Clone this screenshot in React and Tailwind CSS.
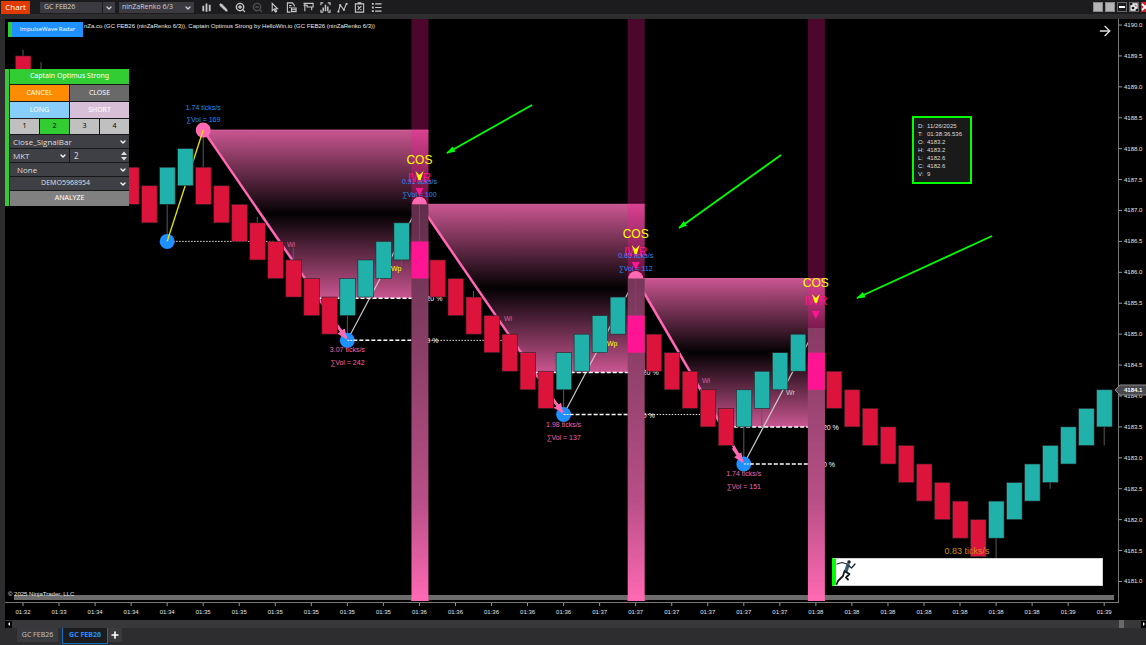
import React from 'react';
import { Plus, ZoomIn, ZoomOut, Pencil, ArrowRight, ChevronDown } from 'lucide-react';

// Scales: bar index -> x, price -> y
const px = (i) => 18 + i * 18.02;
const py = (price) => 6 + (4190 - price) * 61.83;

const BODY = 0.6;

// [index of first bar, top of its body, step per bar, number of bars, kind]
const RUNS = [
  [0, 4189.5, -0.3, 8, 'down'],
  [8, 4187.7, 0.3, 2, 'up'],
  [10, 4187.7, -0.3, 8, 'down'],
  [18, 4185.9, 0.3, 4, 'up'],
  [22, 4186.5, 0, 1, 'signal'],
  [23, 4186.2, -0.3, 7, 'down'],
  [30, 4184.7, 0.3, 4, 'up'],
  [34, 4185.3, 0, 1, 'signal'],
  [35, 4185.0, -0.3, 5, 'down'],
  [40, 4184.1, 0.3, 4, 'up'],
  [44, 4184.7, 0, 1, 'signal'],
  [45, 4184.4, -0.3, 9, 'down'],
  [54, 4182.3, 0.3, 7, 'up'],
];

const CANDLES = RUNS.flatMap(([start, top, step, count, kind]) =>
  Array.from({ length: count }, (_, n) => ({ i: start + n, top: top + step * n, kind }))
);

// [bar, from price, to price]
const WICKS = [
  [0, 4189.6, 4189.5],
  [1, 4189.4, 4189.2],
  [8, 4187.1, 4186.5],
  [10, 4188.3, 4187.7],
  [13, 4186.9, 4186.8],
  [15, 4186.4, 4186.2],
  [18, 4185.3, 4184.9],
  [21, 4186.2, 4186.1],
  [25, 4185.7, 4185.6],
  [30, 4184.1, 4183.7],
  [40, 4183.5, 4182.9],
  [41, 4183.8, 4183.5],
  [54, 4181.7, 4181.3],
  [57, 4182.6, 4182.5],
  [60, 4183.5, 4183.2],
];

const CANDLE_COLORS = { down: '#dc143c', up: '#20b2aa', signal: '#ff1493' };

const WAVES = [
  {
    start: 10, high: 4188.3, lowBar: 18, low: 4184.9, end: 22, endPrice: 4187.1,
    lowText: ['3.07 ticks/s', '∑Vol = 242'], topText: ['0.91 ticks/s', '∑Vol = 100'],
    cos: 146, down: [283, 228, 'Wi'], back: [390, 252, 'Wp', '#ffff00'],
  },
  {
    start: 22, high: 4187.1, lowBar: 30, low: 4183.7, end: 34, endPrice: 4185.9,
    lowText: ['1.98 ticks/s', '∑Vol = 137'], topText: ['0.65 ticks/s', '∑Vol = 112'],
    cos: 220, down: [500, 302, 'Wi'], back: [606, 327, 'Wp', '#ffff00'],
  },
  {
    start: 34, high: 4185.9, lowBar: 40, low: 4182.9, end: 44, endPrice: 4185.1,
    lowText: ['1.74 ticks/s', '∑Vol = 151'], topText: null,
    cos: 269, down: [698, 364, 'Wi'], back: [785, 376, 'Wr', '#d0d0d0'],
  },
];

const DOTTED = [
  [8, 14, 4186.5],
  [22, 27, 4184.9],
  [34, 38, 4183.7],
];

const GREEN_ARROWS = [
  [527, 86, 442, 134],
  [776, 136, 674, 209],
  [987, 217, 852, 279],
];

const PRICES = Array.from({ length: 19 }, (_, n) => 4190 - n * 0.5);

const TIMES = [
  '01:32', '01:33', '01:34', '01:34', '01:34', '01:35', '01:35', '01:35', '01:35', '01:35', '01:35',
  '01:36', '01:36', '01:36', '01:36', '01:36', '01:37', '01:37', '01:37', '01:37', '01:37', '01:37',
  '01:38', '01:38', '01:38', '01:38', '01:38', '01:38', '01:38', '01:39', '01:39',
];

const Wave = ({ wave }) => {
  const x0 = px(wave.start);
  const y0 = py(wave.high);
  const x1 = px(wave.lowBar);
  const y1 = py(wave.low);
  const bottom = y1 - (y1 - y0) * 0.2;
  const right = px(wave.end) + 9;
  const xb = x0 + (x1 - x0) * 0.8;
  return (
    <g>
      <polygon points={`${x0},${y0} ${right},${y0} ${right},${bottom} ${xb},${bottom}`} fill="url(#zone)" />
      <line x1={x0} y1={y0} x2={right} y2={y0} stroke="#d45f9c" />
      <line x1={x0} y1={y0} x2={x1} y2={y1} stroke="#ff69b4" strokeWidth="2.5" />
      <line x1={x1} y1={y1} x2={px(wave.end)} y2={py(wave.endPrice)} stroke="#c8c8c8" strokeWidth="1.2" />
      <line x1={xb} y1={bottom} x2={right} y2={bottom} stroke="#fff" strokeWidth="1.5" strokeDasharray="4 2" />
      <line x1={x1} y1={y1} x2={right} y2={y1} stroke="#fff" strokeWidth="1.5" strokeDasharray="4 2" />
      <text x={right - 2} y={bottom + 3} fill="#fff" fontSize="7">20 %</text>
      <text x={right - 2} y={y1 + 3} fill="#fff" fontSize="7">0 %</text>
    </g>
  );
};

const Signal = ({ wave }) => {
  const x = px(wave.end);
  const top = py(wave.endPrice);
  return (
    <g>
      <rect x={x - 8} y="0" width="17" height={top} fill="#ff1493" fillOpacity="0.3" />
      {wave.topText && <circle cx={x} cy={top} r="7.5" fill="#ff69b4" />}
      <rect x={x - 8} y={top} width="17" height={582 - top} fill="url(#band)" />
      <line x1={x} y1={top} x2={x} y2={top + 37} stroke="#b02878" />
    </g>
  );
};

const SignalLabel = ({ wave }) => {
  const x = px(wave.end);
  return (
    <g textAnchor="middle">
      {wave.topText && (
        <g fill="#1e90ff" fontSize="7">
          <text x={x} y={wave.cos + 19}>{wave.topText[0]}</text>
          <text x={x} y={wave.cos + 32}>{wave.topText[1]}</text>
        </g>
      )}
      <text x={x} y={wave.cos - 1} fill="#ffff00" fontSize="12">COS</text>
      <text x={x} y={wave.cos + 17} fill="#ff1493" fontSize="12">IWR</text>
      <path
        d={`M${x - 4} ${wave.cos + 6} L${x} ${wave.cos + 10} L${x + 4} ${wave.cos + 6} L${x + 1} ${wave.cos + 15} H${x - 1} Z`}
        fill="#ffff00"
      />
      <path d={`M${x - 4} ${wave.cos + 23} h8 l-4 8 Z`} fill="#ff1493" />
    </g>
  );
};

const Chart = () => (
  <svg
    viewBox="0 0 1141 601"
    className="block w-full h-auto font-['Liberation_Sans',Arial,sans-serif]"
    role="img"
    aria-label="GC FEB26 price chart"
  >
    <defs>
      <linearGradient id="zone" x1="0" y1="0" x2="0" y2="1">
        <stop offset="0" stopColor="#ca5691" />
        <stop offset="0.5" stopColor="#030102" />
        <stop offset="1" stopColor="#ca5691" />
      </linearGradient>
      <linearGradient id="band" gradientUnits="userSpaceOnUse" x1="0" y1="180" x2="0" y2="582">
        <stop offset="0" stopColor="#5e2c48" />
        <stop offset="0.25" stopColor="#7b395d" />
        <stop offset="0.75" stopColor="#b84f86" />
        <stop offset="1" stopColor="#ff69b4" />
      </linearGradient>
      <marker id="pinkHead" markerWidth="10" markerHeight="9" refX="9" refY="4.5" orient="auto" markerUnits="userSpaceOnUse">
        <path d="M0 0 L10 4.5 L0 9 Z" fill="#ff69b4" />
      </marker>
      <marker id="greenHead" markerWidth="9" markerHeight="6" refX="8" refY="3" orient="auto" markerUnits="userSpaceOnUse">
        <path d="M0 0 L9 3 L0 6 Z" fill="#00ff00" />
      </marker>
    </defs>

    {WAVES.map((wave) => (
      <Wave key={wave.start} wave={wave} />
    ))}

    {DOTTED.map(([from, to, price]) => (
      <line
        key={from}
        x1={px(from)}
        x2={px(to)}
        y1={py(price)}
        y2={py(price)}
        stroke="#e8e8e8"
        strokeDasharray="1.5 1.5"
      />
    ))}

    {WICKS.map(([i, from, to]) => (
      <line key={i} x1={px(i)} x2={px(i)} y1={py(from)} y2={py(to)} stroke="#5a5a5a" />
    ))}

    <circle cx={px(8)} cy={py(4186.5)} r="7.5" fill="#1e90ff" />
    <circle cx={px(10)} cy={py(4188.3)} r="7.5" fill="#ff69b4" />
    <line x1={px(8)} y1={py(4186.5)} x2={px(10)} y2={py(4188.3)} stroke="#e6e600" strokeWidth="1.4" />

    {WAVES.map((wave) => (
      <g key={wave.lowBar}>
        <circle cx={px(wave.lowBar)} cy={py(wave.low)} r="7.5" fill="#1e90ff" />
        <line
          x1={px(wave.lowBar) - 11}
          y1={py(wave.low) - 16}
          x2={px(wave.lowBar) - 1}
          y2={py(wave.low) - 2}
          stroke="#ff69b4"
          strokeWidth="2.5"
          markerEnd="url(#pinkHead)"
        />
        <line
          x1={px(wave.lowBar)}
          x2={px(wave.lowBar) + 8}
          y1={py(wave.low)}
          y2={py(wave.low)}
          stroke="#fff"
          strokeDasharray="2 1"
        />
      </g>
    ))}

    {WAVES.map((wave) => (
      <Signal key={wave.end} wave={wave} />
    ))}

    {CANDLES.map(({ i, top, kind }) => (
      <rect
        key={i}
        x={kind === 'signal' ? px(i) - 8 : px(i) - 7.5}
        y={py(top)}
        width={kind === 'signal' ? 17 : 15.5}
        height={BODY * 61.83}
        fill={CANDLE_COLORS[kind]}
        stroke={kind === 'signal' ? 'none' : '#2a2024'}
        strokeWidth="0.6"
      />
    ))}

    {WAVES.map((wave) => (
      <g key={wave.low} fontSize="7">
        <text x={wave.down[0] - 1} y={wave.down[1]} fill="#ff69b4" fillOpacity="0.8">{wave.down[2]}</text>
        <text x={wave.back[0] - 4} y={wave.back[1]} fill={wave.back[3]}>{wave.back[2]}</text>
        <g fill="#f066ad" textAnchor="middle">
          <text x={px(wave.lowBar)} y={py(wave.low) + 12}>{wave.lowText[0]}</text>
          <text x={px(wave.lowBar)} y={py(wave.low) + 25}>{wave.lowText[1]}</text>
        </g>
        <SignalLabel wave={wave} />
      </g>
    ))}

    <g fill="#1e90ff" fontSize="7" textAnchor="middle">
      <text x={px(10)} y="91">1.74 ticks/s</text>
      <text x={px(10)} y="103">∑Vol = 169</text>
    </g>
    <text x="962" y="535" fill="#cc8c1c" fontSize="9" textAnchor="middle">0.83 ticks/s</text>

    {GREEN_ARROWS.map(([x1, y1, x2, y2]) => (
      <line key={x1} x1={x1} y1={y1} x2={x2} y2={y2} stroke="#00ff00" strokeWidth="1.8" markerEnd="url(#greenHead)" />
    ))}

    {/* axes */}
    <rect x="9" y="576" width="1100" height="5" fill="#6c6c6c" />
    {WAVES.map((wave) => (
      <rect key={wave.end} x={px(wave.end) - 8} y="576" width="17" height="6" fill="#ff69b4" />
    ))}
    <text x="3" y="577" fill="#e8e8e8" fontSize="6">© 2025 NinjaTrader, LLC</text>
    <path d="M1113.5 0 V583.5 M0 583.5 H1114" stroke="#777" fill="none" />
    <g fill="#e4e4e4" fontSize="6">
      {PRICES.map((price) => (
        <g key={price}>
          <line x1="1114" x2="1117" y1={py(price)} y2={py(price)} stroke="#999" />
          <text x="1119" y={py(price) + 2}>{price.toFixed(1)}</text>
        </g>
      ))}
      {TIMES.map((time, n) => (
        <g key={n} textAnchor="middle">
          <line x1={px(n * 2)} x2={px(n * 2)} y1="584" y2="587" stroke="#999" />
          <text x={px(n * 2)} y="595">{time}</text>
        </g>
      ))}
    </g>
    <path d="M1110 371 l5 -5 H1142 V376 H1115 Z" fill="#4a4a4e" stroke="#8a8a8a" />
    <text x="1119" y="373" fill="#fff" fontSize="6" fontWeight="bold">4184.1</text>
  </svg>
);

const PanelSelect = ({ label, value, className = '' }) => (
  <div className="relative flex-1">
    <select
      aria-label={label}
      defaultValue={value}
      className={`block h-[13px] w-full appearance-none bg-[#3f3f46] text-[#dcdcdc] ${className}`}
    >
      <option>{value}</option>
    </select>
    <ChevronDown
      className="pointer-events-none absolute right-[2px] top-1/2 size-2 -translate-y-1/2 text-white"
      strokeWidth={4}
    />
  </div>
);

const StrategyPanel = () => (
  <section className="absolute left-0 top-[50px] w-[124px] border-l-4 border-[#32cd32] bg-[#18181a] font-['Noto_Sans',sans-serif] text-[7px] text-white">
    <div className="flex flex-col gap-px pl-px">
      <h2 className="flex h-[15px] items-center justify-center bg-[#32cd32]">Captain Optimus Strong</h2>
      <div className="grid grid-cols-2 gap-px">
        <button className="h-4 bg-[#ff8c00]">CANCEL</button>
        <button className="h-4 bg-[#696969]">CLOSE</button>
        <button className="h-4 bg-[#87cefa]">LONG</button>
        <button className="h-4 bg-[#d8bfd8]">SHORT</button>
      </div>
      <div className="grid grid-cols-4 gap-px text-black">
        <button className="h-[15px] bg-[#c0c0c0]">1</button>
        <button className="h-[15px] bg-[#32cd32]">2</button>
        <button className="h-[15px] bg-[#c0c0c0]">3</button>
        <button className="h-[15px] bg-[#c0c0c0]">4</button>
      </div>
      <div className="flex">
        <PanelSelect label="Entry mode" value="Close_SignalBar" className="pl-[3px] text-[8px] font-['Open_Sans',sans-serif]" />
      </div>
      <div className="grid grid-cols-2 gap-px">
        <div className="flex">
          <PanelSelect label="Order type" value="MKT" className="pl-[3px] text-[8px] font-['Open_Sans',sans-serif]" />
        </div>
        <div className="relative">
          <input
            aria-label="Quantity"
            defaultValue="2"
            className="block h-[13px] w-full bg-[#3f3f46] pl-1 text-[8px] text-[#dcdcdc]"
          />
          <svg viewBox="0 0 6 10" className="absolute right-[2px] top-[2px] h-[10px] w-[6px]" fill="#e0e0e0">
            <path d="M0 4 L3 0.5 L6 4 Z M0 6 L3 9.5 L6 6 Z" />
          </svg>
        </div>
      </div>
      <div className="flex">
        <PanelSelect label="ATM strategy" value="None" className="pl-[7px] text-[8px] font-['Open_Sans',sans-serif]" />
      </div>
      <div className="flex">
        <PanelSelect label="Account" value="DEMO5968954" className="pr-2 text-center text-[7px]" />
      </div>
      <button className="h-[15px] bg-[#808080]">ANALYZE</button>
    </div>
  </section>
);

const BAR_INFO = [
  ['D:', '11/26/2025'],
  ['T:', '01:38:36.536'],
  ['O:', '4183.2'],
  ['H:', '4183.2'],
  ['L:', '4182.6'],
  ['C:', '4182.6'],
  ['V:', '9'],
];

const DataBox = () => (
  <dl className="absolute right-[174px] top-[97px] w-[60px] border-2 border-[#00ff00] bg-[#1a1a1a] py-1 pl-1 font-['Liberation_Sans',Arial,sans-serif] text-[6px] leading-[8px] text-[#dcdcdc]">
    {BAR_INFO.map(([key, value]) => (
      <div key={key} className="flex">
        <dt className="w-[9px]">{key}</dt>
        <dd>{value}</dd>
      </div>
    ))}
  </dl>
);

const Banner = () => (
  <div className="absolute right-[43px] top-[539px] h-[28px] w-[271px] border border-l-4 border-[#d0d0d0] border-l-[#00ff00] bg-white">
    <svg viewBox="0 0 20 26" className="h-[26px] w-5" fill="none" strokeLinecap="round" strokeLinejoin="round">
      <circle cx="13" cy="3" r="1.8" fill="#20242a" />
      <path d="M12 6 L10 12" stroke="#3c5670" strokeWidth="3.5" />
      <path d="M11 5 L6 3.5 L1 5" stroke="#1a2530" strokeWidth="1.3" />
      <path d="M13 7 L15.5 9 L19 5" stroke="#1a2530" strokeWidth="1.3" />
      <path d="M10 13 L13.500 15 L10 18.500 L12 20.500" stroke="#15181c" strokeWidth="1.8" />
      <path d="M8.500 12 L7 17 L2 22 L0.800 25" stroke="#15181c" strokeWidth="1.8" />
    </svg>
  </div>
);

const ToolIcon = ({ label, children }) => (
  <button aria-label={label} className="flex size-[17px] items-center justify-center text-[#c8c8c8]">
    {children}
  </button>
);

const Glyph = ({ children }) => (
  <svg viewBox="0 0 12 12" className="size-[11px]" fill="none" stroke="currentColor" strokeWidth="1.2">
    {children}
  </svg>
);

const Toolbar = () => (
  <header className="flex h-[14px] items-center bg-[#1c1c1e] pl-px text-[7px] text-[#d0d0d0]">
    <h1 className="flex h-[13px] w-[29px] items-center justify-center bg-[#e03a00] text-[8px] text-white">Chart</h1>
    <div className="relative ml-[10px] h-[11px] w-[75px]">
      <select
        aria-label="Instrument"
        defaultValue="GC FEB26"
        className="block h-[11px] w-full appearance-none bg-[#3a3a40] pl-1"
      >
        <option>GC FEB26</option>
      </select>
      <span className="pointer-events-none absolute right-3 top-0 h-full w-px bg-[#1c1c1e]" />
      <ChevronDown className="pointer-events-none absolute right-[2px] top-[2px] size-2" strokeWidth={4} />
    </div>
    <div className="relative ml-1 h-[11px] w-[75px]">
      <select
        aria-label="Bar type"
        defaultValue="ninZaRenko 6/3"
        className="block h-[11px] w-full appearance-none bg-[#3a3a40] pl-[3px]"
      >
        <option>ninZaRenko 6/3</option>
      </select>
      <ChevronDown className="pointer-events-none absolute right-[2px] top-[2px] size-2" strokeWidth={4} />
    </div>
    <nav className="ml-1 flex">
      <ToolIcon label="Chart style">
        <Glyph>
          <path d="M2.5 4 V10 M6 1.5 V10.5 M9.5 3 V10" strokeWidth="2" />
        </Glyph>
      </ToolIcon>
      <ToolIcon label="Draw">
        <Pencil className="size-[9px] -scale-x-100" fill="currentColor" />
      </ToolIcon>
      <ToolIcon label="Zoom in">
        <ZoomIn className="size-[11px]" strokeWidth={3} />
      </ToolIcon>
      <ToolIcon label="Zoom out">
        <ZoomOut className="size-[11px] text-[#505050]" strokeWidth={3} />
      </ToolIcon>
      <ToolIcon label="Cursor">
        <Glyph>
          <path d="M3.5 1.5 V9.5 L5.5 7.8 L7 11 L8.3 10.4 L6.9 7.4 H9.3 Z" />
        </Glyph>
      </ToolIcon>
      <ToolIcon label="Data box">
        <Glyph>
          <path d="M5 11 H1.5 V1 H7 L9 3.5 V5 M3.5 4 H6 M3.5 6 H5 M6 6.5 H11 V10.5 H6 Z M6 8.5 H11" />
        </Glyph>
      </ToolIcon>
      <ToolIcon label="Chart trader">
        <Glyph>
          <path d="M0.5 1.5 H11 V5.5 H4.5 V3.5 H0.5 M2 1.5 V10 M9.5 5.5 V9" />
        </Glyph>
      </ToolIcon>
      <ToolIcon label="Data series">
        <Glyph>
          <path d="M1 3.5 V1 H3.5 M8.5 1 H11 V3.5 M1 8.5 V11 H3.5 M8.5 11 H11 V8.5" />
          <path d="M3.5 10 V6 M6 10 V3 M8.5 10 V5" strokeWidth="1.6" />
        </Glyph>
      </ToolIcon>
      <ToolIcon label="Indicators">
        <Glyph>
          <path d="M1.5 10.5 L3.5 3.5 L7.5 8.5 L10.5 1.5" />
          <path d="M2.5 3.5 h2 M6.5 8.5 h2 M9.5 2 h2 M0.5 10.5 h2" strokeWidth="2" />
        </Glyph>
      </ToolIcon>
      <ToolIcon label="Strategies">
        <Glyph>
          <path d="M1.5 2 H10.5 V11 H1.5 Z M4 1 H8 M4 4.5 L8 8.5 M8 4.5 L4 8.5" />
        </Glyph>
      </ToolIcon>
      <ToolIcon label="Properties">
        <Glyph>
          <path d="M4.5 2 H11.5 M4.5 6 H11.5 M4.5 10 H11.5" />
          <path d="M1 2 H3 M1 6 H3 M1 10 H3" strokeWidth="2" />
        </Glyph>
      </ToolIcon>
    </nav>
    <div className="ml-auto flex gap-[2px] overflow-hidden">
      <button aria-label="Link instrument" className="size-[10px] border border-[#888] bg-[#b4b4b4]" />
      <button aria-label="Link interval" className="size-[10px] border border-[#888] bg-[#b4b4b4]" />
      <button aria-label="Minimize" className="flex size-[10px] items-center justify-center border border-[#666] bg-[#1c1c1e]">
        <span className="h-[2px] w-[6px] bg-white" />
      </button>
      <button aria-label="Restore" className="flex size-[10px] items-center justify-center border border-[#666] bg-[#1c1c1e]">
        <svg viewBox="0 0 8 8" className="size-2" fill="none" stroke="#fff" strokeWidth="1.3">
          <path d="M3 3 V1 H7 V5 H5 M1 3 H5 V7 H1 Z" />
        </svg>
      </button>
      <button aria-label="Close" className="flex h-[10px] w-[5px] items-center overflow-hidden bg-[#d0202c]">
        <svg viewBox="0 0 8 8" className="size-2 shrink-0" stroke="#fff" strokeWidth="1.8">
          <path d="M1 1 L7 7 M7 1 L1 7" />
        </svg>
      </button>
    </div>
  </header>
);

const App = () => (
  <div className="flex min-h-screen flex-col bg-[#2d2d30] font-['Open_Sans','Noto_Sans',sans-serif]">
    <Toolbar />
    <main className="border-l-[5px] border-t-[5px] border-[#2d2d30] bg-black">
      <div className="relative">
        <Chart />
        <p className="absolute left-[79px] top-[3px] font-['Liberation_Sans',Arial,sans-serif] text-[6px] leading-[8px] text-[#e8e8e8]">
          nZa.co (GC FEB26 (ninZaRenko 6/3)), Captain Optimus Strong by HelloWin.io (GC FEB26 (ninZaRenko 6/3))
        </p>
        <button className="absolute left-[3px] top-[3px] flex h-[15px] w-[75px] items-center justify-center border-l-4 border-[#32cd32] bg-[#1e90ff] text-[6px] text-white">
          ImpulseWave Radar
        </button>
        <StrategyPanel />
        <DataBox />
        <Banner />
        <ArrowRight className="absolute right-[33px] top-[4px] size-4 text-[#e0e0e0]" />
      </div>
    </main>
    <footer className="pl-[5px]">
      <div className="flex h-2 items-center bg-[#38383b]">
        <button aria-label="Scroll left" className="flex h-[7px] w-[7px] items-center justify-center bg-black">
          <svg viewBox="0 0 4 4" className="size-1" fill="#fff">
            <path d="M3 0 V4 L1 2 Z" />
          </svg>
        </button>
        <span className="ml-auto mr-[17px] h-2 w-[5px] bg-[#6a6a6a]" />
        <button aria-label="Scroll right" className="flex h-[7px] w-[5px] items-center justify-center bg-black">
          <svg viewBox="0 0 4 4" className="size-1" fill="#fff">
            <path d="M1 0 V4 L3 2 Z" />
          </svg>
        </button>
      </div>
      <div className="flex items-start pl-3 font-['Noto_Sans',sans-serif] text-[7px]">
        <button className="h-[14px] w-[41px] bg-[#3a3a3e] text-[#c0c0c0]">GC FEB26</button>
        <button className="ml-1 h-[16px] w-[46px] border border-t-0 border-[#1070c0] bg-[#1c1c1e] font-bold text-[#1e90ff]">
          GC FEB26
        </button>
        <button aria-label="Add tab" className="flex h-[14px] w-[14px] items-center justify-center bg-[#3a3a3e] text-white">
          <Plus className="size-[10px]" strokeWidth={4} />
        </button>
      </div>
    </footer>
  </div>
);

export default App;
